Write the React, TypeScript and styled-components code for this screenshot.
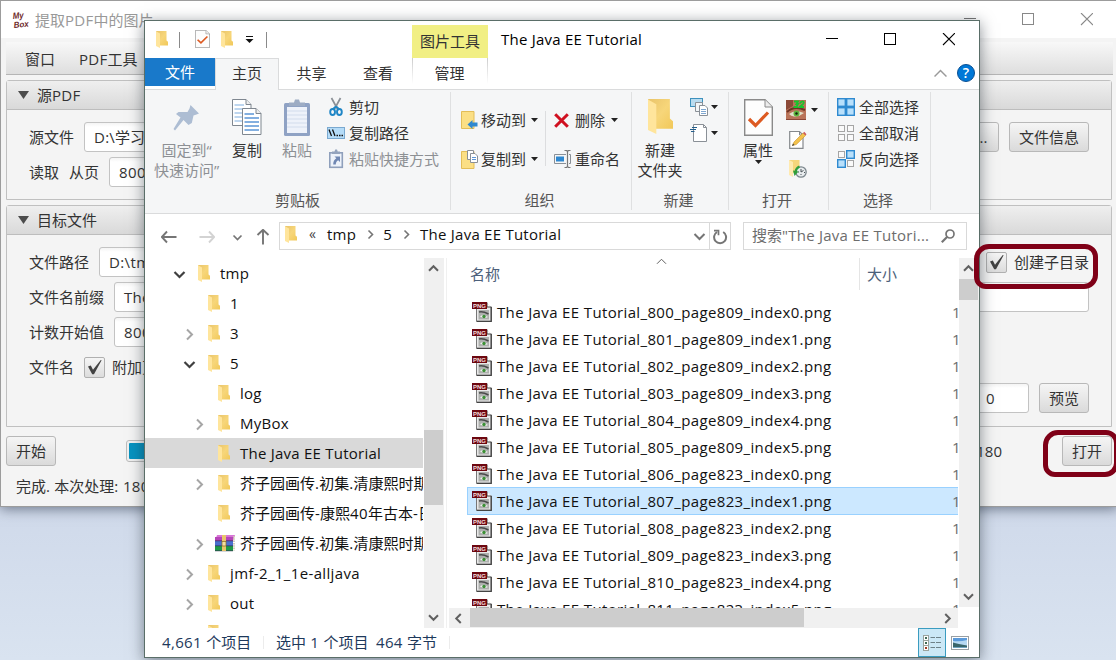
import React from 'react';
import styled, { createGlobalStyle, css } from 'styled-components';

const GlobalStyle = createGlobalStyle`
  *, *::before, *::after { box-sizing: border-box; }
  body { margin: 0; overflow: hidden; }
  body, #root { font-family: "Open Sans", "Noto Sans CJK SC", sans-serif; font-size: 15px; }
  svg { display: block; flex: none; }
`;

/* ---------- text ---------- */

const Latin = styled.span<{ $digits: boolean }>`
  letter-spacing: ${p => (p.$digits ? 0.36 : 0.24)}px;
`;

/** Opens up the Latin runs between the evenly spaced Chinese glyphs. */
function Mixed({ text }: { text: string }) {
  const runs = text.split(/([\u3000-\u9fff]+)/).filter(Boolean);
  return (
    <>
      {runs.map((run, i) =>
        /[\u3000-\u9fff]/.test(run) ? <React.Fragment key={i}>{run}</React.Fragment> : <Latin key={i} $digits={/\d/.test(run)}>{run}</Latin>
      )}
    </>
  );
}

/* ---------- desktop ---------- */

const Desktop = styled.div`
  position: relative;
  width: 1116px;
  height: 660px;
  overflow: hidden;
  background: linear-gradient(#cfd9ea 500px, #d9e3f0 660px);
  white-space: pre;
  line-height: 20px;
`;

const Ring = styled.div<{ $x: number; $y: number; $w: number; $h: number }>`
  position: absolute;
  left: ${p => p.$x}px;
  top: ${p => p.$y}px;
  width: ${p => p.$w}px;
  height: ${p => p.$h}px;
  border: 5px solid #7f0017;
  border-radius: 15px 13px 14px 12px;
`;

/* ---------- MyBox window ---------- */

const AppWindow = styled.section`
  position: absolute;
  left: 0;
  top: 0;
  width: 1118px;
  height: 507px;
  border: 1px solid #9c9c9c;
  background: #f4f4f4;
  color: #333;
  display: flex;
  flex-direction: column;
  box-shadow: 0 2px 12px rgba(30, 40, 60, 0.55);

  > * { flex: none; }
`;

const AppTitle = styled.header`
  height: 37px;
  padding: 0 24px 0 11px;
  display: flex;
  align-items: center;
  background: #fff;
  color: #999;
`;

const AppName = styled.span`
  margin-left: 5px;
  flex: 1;
`;

const AppControls = styled.div`
  display: flex;
  gap: 46px;
`;

const AppMenu = styled.nav`
  height: 33px;
  margin: 4px 4px 0 5px;
  padding: 2px 19px 0;
  display: flex;
  align-items: center;
  gap: 24px;
  background: linear-gradient(#f8f8f8, #dedede);
  border-bottom: 1px solid #b5b5b5;
`;

const Pane = styled.section<{ $height: number }>`
  height: ${p => p.$height}px;
  margin: 5px 5px 0 5px;
  border: 1px solid #c0c0c0;
  border-radius: 3px 3px 0 0;
`;

const PaneHead = styled.h2`
  margin: 0;
  height: 29px;
  padding: 0 11px;
  display: flex;
  align-items: center;
  gap: 8px;
  font-size: 15px;
  font-weight: 400;
  background: linear-gradient(#efefef, #d9d9d9);
  border-bottom: 1px solid #bdbdbd;
`;

const PaneBody = styled.div`
  padding: 12px 22px;
  display: flex;
  flex-direction: column;
  gap: 5px;
`;

const FormRow = styled.div<{ $top?: number }>`
  height: 30px;
  margin-top: ${p => p.$top ?? 0}px;
  display: flex;
  align-items: center;
  gap: 10px;
`;

const Field = styled.div<{ $width?: number }>`
  height: 30px;
  ${p => (p.$width ? css`width: ${p.$width}px;` : css`flex: 1;`)}
  padding: 4px 9px;
  background: linear-gradient(#f4f4f4, #fff 4px);
  border: 1px solid #c3c3c3;
  border-radius: 3px;
`;

const PushButton = styled.button<{ $width: number }>`
  width: ${p => p.$width}px;
  height: 30px;
  flex: none;
  padding: 0 0 1px;
  font: inherit;
  color: #333;
  background: linear-gradient(#f5f5f5, #dadada);
  border: 1px solid #b8b8b8;
  border-radius: 3px;
`;

const Check = styled.span`
  width: 21px;
  height: 21px;
  flex: none;
  display: grid;
  place-items: center;
  background: linear-gradient(#f5f5f5, #dcdcdc);
  border: 1px solid #b0b0b0;
  border-radius: 2px;
`;

const CheckLabel = styled.span`
  display: flex;
  align-items: center;
  gap: 7px;
`;

const Spacer = styled.span`
  flex: 1;
`;

const ActionRow = styled.div`
  height: 30px;
  margin: 9px 5px 0 5px;
  display: flex;
  align-items: center;
`;

const Progress = styled.div`
  width: 840px;
  height: 22px;
  margin-left: 70px;
  padding: 2px;
  border: 1px solid #bcbcbc;
  border-radius: 3px;
  background: #f0f0f0;
`;

const ProgressFill = styled.div`
  height: 16px;
  background: #0893c0;
  border-radius: 1px;
`;

const Count = styled.span`
  width: 36px;
  text-align: right;
`;

const AppStatus = styled.div`
  padding: 10px 15px 0;
`;

/* ---------- Explorer window ---------- */

const Explorer = styled.section`
  position: absolute;
  left: 144px;
  top: 20px;
  width: 836px;
  height: 638px;
  border: 1px solid #5a6e68;
  background: #fff;
  color: #111;
  display: flex;
  flex-direction: column;
  box-shadow: 0 3px 14px rgba(20, 30, 40, 0.5);
`;

const TitleRow = styled.header`
  height: 37px;
  display: flex;
  align-items: center;
`;

const QuickAccess = styled.div`
  width: 267px;
  padding: 0 0 1px 11px;
  display: flex;
  align-items: center;
`;

const Bar = styled.i<{ $left: number; $right: number }>`
  width: 1px;
  height: 16px;
  margin: 2px ${p => p.$right}px 0 ${p => p.$left}px;
  background: #8a8a8a;
`;

const ToolTabHead = styled.div`
  width: 76px;
  height: 33px;
  margin-top: 4px;
  padding-top: 6px;
  text-align: center;
  background: #f1ef84;
  color: #333;
`;

const WindowTitle = styled.h1`
  margin: 0 0 1px 13px;
  flex: 1;
  font-size: 15px;
  font-weight: 400;
  color: #000;
`;

const WindowControls = styled.div`
  display: flex;
  gap: 46px;
  margin-right: 24px;
`;

const TabRow = styled.nav`
  height: 32px;
  display: flex;
  align-items: flex-start;
  color: #333;
  border-bottom: 1px solid #dadbdc;
`;

const Tab = styled.div<{ $width: number; $kind?: 'file' | 'active' | 'tool' }>`
  width: ${p => p.$width}px;
  height: 28px;
  padding: 5px 1px 0 0;
  text-align: center;
  ${p => p.$kind === 'file' && css`background: #1979ca; color: #fff; padding: 4px 0 0;`}
  ${p => p.$kind === 'active' && css`
    height: 32px;
    background: #f5f6f7;
    border: 1px solid #dadbdc;
    border-bottom: 0;
    padding: 4px 0 0;
  `}
  ${p => p.$kind === 'tool' && css`
    border: solid transparent;
    border-width: 0 1px;
    background: linear-gradient(#fff, #fff) padding-box, linear-gradient(#ccc, #fff 26px) border-box;
  `}
`;

const TabTail = styled.div`
  margin-left: auto;
  padding: 6px 4px 0 0;
  display: flex;
  align-items: center;
  gap: 10px;
`;

const Ribbon = styled.div`
  height: 124px;
  padding: 2px 0 3px;
  display: flex;
  background: #f5f6f7;
  border-bottom: 1px solid #dadbdc;
`;

const Group = styled.section<{ $width: number }>`
  width: ${p => p.$width}px;
  display: flex;
  flex-direction: column;
  border-right: 1px solid #dfe0e1;
`;

const GroupBody = styled.div<{ $left: number }>`
  height: 98px;
  padding-left: ${p => p.$left}px;
  display: flex;
`;

const GroupName = styled.div<{ $inset?: number }>`
  padding-right: ${p => p.$inset ?? 3}px;
  text-align: center;
  color: #555;
`;

const BigButton = styled.div<{ $width: number; $muted?: boolean }>`
  width: ${p => p.$width}px;
  padding-top: 6px;
  display: flex;
  flex-direction: column;
  align-items: center;
  text-align: center;
  color: ${p => (p.$muted ? '#8d9094' : '#333')};
`;

const BigIcon = styled.span`
  height: 42px;
  padding-top: 1px;
`;

const SmallStack = styled.div<{ $left: number; $top: number; $gap: number }>`
  margin-left: ${p => p.$left}px;
  padding-top: ${p => p.$top}px;
  display: flex;
  flex-direction: column;
  gap: ${p => p.$gap}px;
`;

const SmallButton = styled.div<{ $muted?: boolean; $gap?: number }>`
  height: 20px;
  display: flex;
  align-items: center;
  gap: ${p => p.$gap ?? 3}px;
  color: ${p => (p.$muted ? '#8d9094' : '#333')};
`;

const Divider = styled.i`
  width: 1px;
  height: 55px;
  margin: 19px 0 0 7px;
  background: #dcdddf;
`;

const NavRow = styled.div`
  height: 45px;
  padding: 8px 12px 8px 16px;
  display: flex;
  align-items: center;
`;

const NavButtons = styled.div`
  width: 118px;
  padding-top: 2px;
  display: flex;
  align-items: center;
`;

const Push = styled.span<{ $left: number }>`
  flex: none;
  margin-left: ${p => p.$left}px;
`;

const Box = styled.div<{ $width: number; $left?: number }>`
  width: ${p => p.$width}px;
  height: 28px;
  margin-left: ${p => p.$left ?? 0}px;
  display: flex;
  align-items: center;
  border: 1px solid #d9d9d9;
`;

const Crumbs = styled.div`
  flex: 1;
  padding: 0 0 4px 5px;
  display: flex;
  align-items: center;
`;

const Overflow = styled.span`
  width: 9px;
  margin-left: 12px;
  font-size: 14px;
  color: #444;
`;

const RefreshCell = styled.div`
  width: 21px;
  height: 26px;
  padding-top: 2px;
  margin-left: 3px;
  display: grid;
  place-items: center;
  border-left: 1px solid #d9d9d9;
`;

const SearchText = styled.span`
  flex: 1;
  padding: 0 0 2px 8px;
  color: #6d6d6d;
`;

const Content = styled.div`
  height: 370px;
  display: flex;
`;

const Tree = styled.div`
  width: 278px;
  height: 370px;
  overflow: hidden;
`;

const TreeRow = styled.div<{ $depth: number; $selected?: boolean }>`
  height: 30px;
  padding-left: ${p => 28 + p.$depth * 10}px;
  display: flex;
  align-items: center;
  background: ${p => (p.$selected ? '#d9d9d9' : 'transparent')};
`;

const TreeArrow = styled.span`
  width: 25px;
  flex: none;
  padding-top: 2px;
`;

const TreeIcon = styled.span`
  width: 22px;
  flex: none;
`;

const ArchiveSlot = styled.div`
  margin-left: -3px;
`;

const TreeLabel = styled.span`
  flex: none;
`;

const VTrack = styled.div<{ $height: number }>`
  width: 20px;
  height: ${p => p.$height}px;
  padding: 4px 0;
  display: flex;
  flex-direction: column;
  align-items: flex-start;
  background: #f0f0f0;

  > svg { margin-left: 3px; }
`;

const VThumb = styled.div<{ $top: number; $height: number }>`
  width: 19px;
  height: ${p => p.$height}px;
  margin: ${p => p.$top}px 0 auto;
  background: #cdcdcd;
`;

const FilePane = styled.div`
  width: 533px;
  margin-left: 2px;
  padding-left: 2px;
  border-left: 1px solid #f0f0f0;
  display: grid;
  grid-template: 350px 20px / 509px 20px;
  column-gap: 1px;
`;

const FileList = styled.div`
  overflow: hidden;
  padding-left: 18px;
`;

const ListHead = styled.div`
  height: 32px;
  margin-bottom: 8px;
  padding-left: 3px;
  display: flex;
  color: #4c607a;
`;

const HeadCell = styled.div<{ $width: number }>`
  width: ${p => p.$width}px;
  padding-top: 6px;
  display: flex;
`;

const SortMark = styled.span`
  margin: -9px 0 0 155px;
`;

const SizeHead = styled.div`
  padding: 6px 0 0 7px;
  border-left: 1px solid #e5e5e5;
`;

const FileRow = styled.div<{ $selected?: boolean }>`
  height: 28px;
  margin-bottom: -1px;
  padding-left: 4px;
  display: flex;
  align-items: center;
  border: 1px solid transparent;
  border-right: 0;
  ${p => p.$selected && css`background: #cce8ff; border-color: #99d1ff;`}
`;

const FileName = styled.span`
  width: 460px;
  flex: none;
  padding-left: 5px;
`;

const FileSize = styled.span`
  color: #6d6d6d;
`;

const HTrack = styled.div`
  height: 20px;
  padding: 0 4px 0 3px;
  display: flex;
  align-items: center;
  background: #f0f0f0;
`;

const HThumb = styled.div`
  width: 334px;
  height: 19px;
  margin: 0 auto 1px 5px;
  background: #cdcdcd;
`;

const StatusBar = styled.footer`
  flex: 1;
  padding-left: 17px;
  display: flex;
  align-items: center;
  color: #1e395b;
`;

const StatusCell = styled.span<{ $width: number }>`
  width: ${p => p.$width}px;
  flex: none;
  padding-bottom: 2px;
`;

const StatusSplit = styled.i`
  width: 1px;
  height: 13px;
  background: #ececec;
`;

const ViewButton = styled.span<{ $on?: boolean }>`
  width: 28px;
  height: 29px;
  display: grid;
  place-items: center;
  border: 1px solid ${p => (p.$on ? '#3a9cc0' : 'transparent')};
  background: ${p => (p.$on ? '#cbe8f6' : 'transparent')};
`;

/* ---------- icons ---------- */

const Folder = ({ w = 12, h = 17 }: { w?: number; h?: number }) => (
  <svg width={w} height={h} viewBox="0 0 12 17" preserveAspectRatio="none">
    <defs>
      <linearGradient id="folderBody" x1="0" y1="0" x2="1" y2="1">
        <stop offset="0" stopColor="#e9c46a" />
        <stop offset=".5" stopColor="#f7d67a" />
        <stop offset="1" stopColor="#f1c859" />
      </linearGradient>
    </defs>
    <path d="M0 0H10.500V9.500L12 10.800V14.500H3.500Z" fill="url(#folderBody)" />
    <path d="M0 .3L4 2.600V17L0 15Z" fill="#ffe59c" />
  </svg>
);

const Chevron = ({ dir, size = 4.5, color = '#505050', width = 2 }: { dir: 'up' | 'down' | 'left' | 'right'; size?: number; color?: string; width?: number }) => {
  const turn = { up: 180, down: 0, left: 90, right: -90 }[dir];
  return (
    <svg width="13" height="13" viewBox="-6.5 -6.5 13 13">
      <path d={`M${-size} ${-size / 2}L0 ${size / 2}L${size} ${-size / 2}`} transform={`rotate(${turn})`} fill="none" stroke={color} strokeWidth={width} />
    </svg>
  );
};

const Arrow = ({ turn = 0, color = '#757575' }: { turn?: number; color?: string }) => (
  <svg width="16" height="16" viewBox="-8 -8 16 16">
    <path d="M7.500 0H-7M-2 -5.500L-7.200 0L-2 5.500" transform={`rotate(${turn})`} fill="none" stroke={color} strokeWidth="1.900" />
  </svg>
);

const Caret = () => (
  <svg width="7" height="4" viewBox="0 0 7 4"><path d="M0 0H7L3.500 4Z" fill="#222" /></svg>
);

const MinIcon = ({ color }: { color: string }) => (
  <svg width="12" height="13"><path d="M0 5.500H12" stroke={color} /></svg>
);
const MaxIcon = ({ color }: { color: string }) => (
  <svg width="12" height="13"><rect x=".5" y=".5" width="11" height="11" fill="none" stroke={color} /></svg>
);
const CloseIcon = ({ color }: { color: string }) => (
  <svg width="13" height="13"><path d="M1 0L13 12M13 0L1 12" stroke={color} strokeWidth="1.100" /></svg>
);

const LogoIcon = () => (
  <svg width="18" height="18" viewBox="0 0 18 18" fontFamily="Liberation Sans" fontStyle="italic" fontWeight="700" fill="#6e2a2a">
    <text x="1" y="8" fontSize="9" textLength="11" lengthAdjust="spacingAndGlyphs" transform="rotate(-5 1 8)">My</text>
    <text x="2" y="17" fontSize="8.500" textLength="15" lengthAdjust="spacingAndGlyphs" transform="rotate(-6 2 17)">Box</text>
  </svg>
);

const TickIcon = () => (
  <svg width="17" height="17" viewBox="0 0 17 17"><path d="M2 7.600L4.800 6.400L7 10.800L14.800 1L15.600 1.300L8 15.200H6.200Z" fill="#424242" /></svg>
);

const TriangleIcon = () => (
  <svg width="11" height="8"><path d="M0 0H11L5.500 8Z" fill="#4c4c4c" /></svg>
);

const CheckedPage = ({ w, h }: { w: number; h: number }) => (
  <svg width={w} height={h} viewBox="0 0 29 37" preserveAspectRatio="none">
    <path d="M.7 .7H21L28.300 8V36.300H.7Z" fill="#fdfdfd" stroke="#8a8a8a" strokeWidth="1.400" />
    <path d="M21 .7V8H28.300" fill="#ececec" stroke="#8a8a8a" />
    <path d="M5 20L11.500 26.500L24 13.500" fill="none" stroke="#dd5a22" strokeWidth="3.200" />
  </svg>
);

const CustomizeIcon = () => (
  <svg width="9" height="7"><path d="M1 .5H8" stroke="#111" /><path d="M.5 3H8.500L4.500 7Z" fill="#111" /></svg>
);

const HelpIcon = () => (
  <svg width="18" height="18" viewBox="0 0 18 18">
    <circle cx="9" cy="9" r="8.500" fill="#0078d7" stroke="#0a4f92" />
    <text x="9" y="14" fontSize="14" textAnchor="middle" fill="#fff" fontWeight="600">?</text>
  </svg>
);

const PinIcon = () => (
  <svg width="27" height="41" viewBox="0 1 27 41">
    <path d="M17.500 7L26 15.500L23.500 16.500L20.500 17.500L18.800 25L15.500 27L10.500 22L2 32.500L.5 31L7.500 19.500L3 16L5.500 14L14.500 14L16.500 10.500Z" fill="#adbdd3" />
  </svg>
);

const PageLines = ({ x, y, tone }: { x: number; y: number; tone: string }) => (
  <g transform={`translate(${x} ${y})`}>
    <path d="M.5 .5H14L19 5.500V26.500H.5Z" fill="#fff" stroke="#7f8790" />
    <path d="M14 .5V5.500H19" fill="#eee" stroke="#7f8790" />
    <path d="M2.500 6H12M2.500 10H17M2.500 14H17M2.500 18H17M2.500 22H17" stroke={tone} strokeWidth="1.300" />
  </g>
);

const CopyIcon = () => (
  <svg width="30" height="37" viewBox="0 0 30 37">
    <PageLines x={0} y={0} tone="#a9c9ea" />
    <PageLines x={10} y={9} tone="#5b95d6" />
  </svg>
);

const PasteIcon = () => (
  <svg width="28" height="38" viewBox="0 0 28 38">
    <rect x="1" y="4" width="26" height="33" rx="1.500" fill="#8fa2c4" />
    <rect x="4" y="8" width="20" height="26" fill="#eef2fa" />
    <path d="M4 12H24M4 16H24M4 20H24M4 24H24M4 28H24" stroke="#d2dcec" />
    <path d="M6 7V3.500H11L12 .5H16L17 3.500H22V7Z" fill="#9dacc4" />
  </svg>
);

const CutIcon = () => (
  <svg width="18" height="20" viewBox="0 0 18 20">
    <path d="M4.500 1L10.500 12M13.500 1L7.500 12" stroke="#8b9096" strokeWidth="1.700" />
    <path d="M9 9.500L5.500 12.500M9 9.500L12.500 12.500" stroke="#1f86c6" strokeWidth="2" />
    <ellipse cx="5.600" cy="15" rx="2.400" ry="3" fill="none" stroke="#1f86c6" strokeWidth="1.900" />
    <ellipse cx="12.400" cy="15" rx="2.400" ry="3" fill="none" stroke="#1f86c6" strokeWidth="1.900" />
  </svg>
);

const CopyPathIcon = () => (
  <svg width="18" height="12" viewBox="0 0 18 12">
    <rect x=".5" y=".5" width="17" height="11" fill="#b5dcf8" stroke="#7aa9d0" />
    <path d="M2 2.500L4.500 9M5.500 2.500L8 9" stroke="#111" strokeWidth="1.300" />
    <path d="M9.500 8.500H11M12 8.500H13.500M14.500 8.500H16" stroke="#111" strokeWidth="1.300" />
  </svg>
);

const PasteLinkIcon = () => (
  <svg width="18" height="20" viewBox="0 0 18 20">
    <rect x="2.800" y="3.800" width="12.500" height="14.500" fill="#edf2fa" stroke="#8fa0bc" strokeWidth="1.600" />
    <path d="M5 5V2.500H7.500L8.200 .5H10L10.700 2.500H13V5Z" fill="#93a3bd" />
    <path d="M7.500 7.500H13V13L11.200 11.200C9.500 12.300 8.800 13.500 8.800 15.500H6.200C6.200 12.500 7.200 10.800 9.300 9.300Z" fill="#6f87b3" />
  </svg>
);

const MoveToIcon = () => (
  <svg width="17" height="18" viewBox="0 0 17 18">
    <path d="M.5 .5H13V17.500H.5Z" fill="#fbdf85" stroke="#e3bd58" />
    <path d="M6.500 13.500L11.500 9V11.500H16.500V15.500H11.500V18Z" fill="#2f88d0" />
  </svg>
);

const CopyToIcon = () => (
  <svg width="17" height="19" viewBox="0 0 17 19">
    <path d="M.5 1.500H13V18.500H.5Z" fill="#fbdf85" stroke="#e3bd58" />
    <path d="M6.500 .5H12.500V9.500H6.500Z" fill="#fff" stroke="#8a9097" />
    <path d="M9.500 3.500H14L16.500 6V12.500H9.500Z" fill="#fff" stroke="#8a9097" />
    <path d="M11 7.500H15M11 9.500H15" stroke="#5b95d6" />
  </svg>
);

const DeleteIcon = () => (
  <svg width="15" height="15" viewBox="0 0 15 15"><path d="M1.200 1.200L13.800 13.800M13.800 1.200L1.200 13.800" stroke="#d01020" strokeWidth="3" /></svg>
);

const RenameIcon = () => (
  <svg width="17" height="18" viewBox="0 0 17 18">
    <path d="M12 4.500H.5V13.500H12M15 4.500H16.500V13.500H15" fill="none" stroke="#8a9097" />
    <rect x="2" y="6.500" width="8" height="5" fill="#2f88d0" />
    <path d="M10.500 .5H12.500L13.500 1.500L14.500 .5H16.500M13.500 1.500V16.500M10.500 17.500H12.500L13.500 16.500L14.500 17.500H16.500" fill="none" stroke="#777" strokeWidth="1.200" />
  </svg>
);

const NewItemIcon = () => (
  <svg width="18" height="18" viewBox="0 0 18 18">
    <rect x=".5" y=".5" width="12" height="8" fill="#b9dcf0" stroke="#3d91bd" />
    <path d="M5.500 4.500H12.500V13.500H5.500Z" fill="#f2f5f7" stroke="#8a9097" />
    <path d="M9.500 7.500H15L17.500 10V17.500H9.500Z" fill="#fff" stroke="#8a9097" />
    <path d="M11 11.500H16M11 13.500H16M11 15.500H16" stroke="#7ea6d0" />
  </svg>
);

const EasyAccessIcon = () => (
  <svg width="18" height="18" viewBox="0 0 18 18">
    <path d="M3.500 .5H13.500L16.500 3.500V17.500H3.500Z" fill="#fff" stroke="#8a9097" />
    <path d="M13.500 .5V3.500H16.500" fill="none" stroke="#8a9097" />
    <path d="M2 3.500H7M0 5.500H6M1 7.500H4.500" stroke="#245f8c" strokeWidth="1.200" />
  </svg>
);

const ViewerIcon = () => (
  <svg width="20" height="20" viewBox="0 0 20 20">
    <rect width="20" height="20" fill="#b9745a" />
    <path d="M0 0H7V6L0 10Z" fill="#8c4a38" />
    <path d="M1 12Q8 5 19 10" fill="none" stroke="#6e3425" strokeWidth="2" />
    <path d="M3 14Q9 9 18 13Q13 17 8 16.500Q5 16 3 14Z" fill="#dfe0c8" />
    <circle cx="10.500" cy="13.500" r="3" fill="#5cb53c" />
    <circle cx="10.500" cy="13.500" r="1.200" fill="#12240e" />
    <path d="M8 1.500H12L10.500 4H12L10.500 7H7.500M14 3.500Q15 1 17 1.500Q19 2.500 16 5L13.500 7H18" fill="none" stroke="#19c32c" strokeWidth="1.800" />
    <path d="M0 19H20V20H0Z" fill="#8a4636" />
  </svg>
);

const EditIcon = () => (
  <svg width="18" height="19" viewBox="0 0 18 19">
    <path d="M.7 1.500H10.500L14 5V18.300H.7Z" fill="#fff" stroke="#85898d" strokeWidth="1.200" />
    <path d="M10.500 1.500V5H14" fill="none" stroke="#85898d" />
    <path d="M3.500 15.500L5 12L14 3L16.500 5.500L7.300 14.500Z" fill="#f3c24c" stroke="#c8922a" strokeWidth=".6" />
    <path d="M14 3L15.300 1.800L17.500 4.200L16.500 5.500Z" fill="#cf5b5b" />
    <path d="M3 16L4 13.500L5.500 15Z" fill="#444" />
  </svg>
);

const HistoryIcon = () => (
  <svg width="18" height="19" viewBox="0 0 18 19">
    <path d="M0 1H10.500V14H0Z" fill="#f6d67b" />
    <path d="M0 1L4 3V18L0 16Z" fill="#ffeab0" />
    <circle cx="12" cy="13" r="5.200" fill="#e8ecee" stroke="#7b868c" strokeWidth="1.300" />
    <path d="M12 10V13L14.500 11.500M9 13H10M12 16V15M15 13.500H16" fill="none" stroke="#4a5358" />
    <path d="M4 11.500L9.500 12.500L5.500 17Z" fill="#2f9e3c" />
    <path d="M6.500 13Q7 9 10.500 7.500" fill="none" stroke="#2f9e3c" strokeWidth="2.200" />
  </svg>
);

const SelectIcon = ({ on }: { on: [boolean, boolean, boolean, boolean] }) => (
  <svg width="18" height="18" viewBox="0 0 18 18">
    {on.map((lit, i) => {
      const x = (i % 2) * 9;
      const y = i > 1 ? 9 : 0;
      return lit ? (
        <rect key={i} x={x + 0.7} y={y + 0.7} width="7.600" height="7.600" fill="#b9e0fb" stroke="#2f8ad0" strokeWidth="1.400" />
      ) : (
        <rect key={i} x={x + 1.5} y={y + 1.5} width="6" height="6" fill="#fafafa" stroke="#a5a5a5" />
      );
    })}
  </svg>
);

const RefreshIcon = () => (
  <svg width="15" height="16" viewBox="0 0 15 16">
    <path d="M10.200 3A6 6 0 1 1 4 3" fill="none" stroke="#757575" strokeWidth="2" />
    <path d="M1 1.700H5.500V6.200" fill="none" stroke="#757575" strokeWidth="1.700" />
  </svg>
);

const SearchIcon = () => (
  <svg width="14" height="14" viewBox="0 0 14 14">
    <circle cx="9" cy="5" r="4" fill="none" stroke="#757575" strokeWidth="1.700" />
    <path d="M6 8L.8 13.200" stroke="#757575" strokeWidth="2.200" />
  </svg>
);

const ArchiveIcon = () => (
  <svg width="20" height="17" viewBox="0 0 20 17">
    <path d="M2 0H20L18 6H0Z" fill="#d774d6" />
    <rect y="2" width="18" height="4" fill="#b544b8" />
    <rect y="6" width="18" height="5" fill="#4a70cf" />
    <rect y="11" width="18" height="5" fill="#1f9a46" />
    <path d="M0 5.800H18M0 10.800H18M0 15.800H18" stroke="#303050" strokeWidth=".7" />
    <rect x="7" y="0" width="4" height="16" fill="#e8c56a" />
    <rect x="7" y="6.500" width="4" height="4.500" fill="#f4e1a0" stroke="#8a6a20" strokeWidth=".7" />
    <path d="M19 1V15.500" stroke="#cfc9b4" strokeWidth="1.800" strokeDasharray="1.500 .8" />
  </svg>
);

const PngIcon = () => (
  <svg width="20" height="20" viewBox="0 0 20 20">
    <path d="M4.500 1H15L19 5V19H4.500Z" fill="#e9e9e9" stroke="#777" />
    <path d="M19.300 5V19.500H4.500" fill="none" stroke="#444" strokeWidth="1.200" />
    <path d="M15 .5V5H19.500" fill="#fff" stroke="#444" />
    <rect x="6.500" y="8" width="10.500" height="9.500" fill="#aeb0ae" />
    <path d="M7 10Q11 9 16.500 12" fill="none" stroke="#4a4a4a" strokeWidth="1.500" />
    <path d="M8 14.500Q11 12 16 15Q12 17 8 14.500Z" fill="#f0f3ee" />
    <circle cx="12" cy="14.500" r="1.700" fill="#3b8f35" />
    <rect y="0" width="15" height="7" fill="#6d0710" />
    <text x="7.500" y="5.900" fontSize="6" fontWeight="700" textAnchor="middle" fill="#f3dcdc" fontFamily="Liberation Sans">PNG</text>
  </svg>
);

const DetailsIcon = () => (
  <svg width="18" height="16" viewBox="0 0 18 16">
    {[0, 5, 10].map(y => (
      <g key={y}>
        <rect x=".5" y={y + 0.5} width="5" height="5" fill="#fff" stroke="#9aa39d" />
        <rect x="2" y={y + 2} width="2" height="2" fill={y === 10 ? '#a03a22' : '#3f6a55'} />
        <path d={`M7.500 ${y + 2.5}H12M13 ${y + 2.5}H18`} stroke="#6e8288" />
      </g>
    ))}
  </svg>
);

const ThumbsIcon = () => (
  <svg width="18" height="14" viewBox="0 0 18 14">
    <rect x=".5" y=".5" width="17" height="13" fill="#fff" stroke="#999fa3" />
    <rect x="2" y="2" width="14" height="10" fill="#b5d8f2" />
    <path d="M2 2H16V4Q9 6 2 5Z" fill="#5b9ada" />
    <path d="M2 6.500Q7 8 16 9.500V12H2Z" fill="#39656a" />
    <path d="M2 11H16V12H2Z" fill="#6fa3c0" />
  </svg>
);

/* ---------- data ---------- */

type Node = { label: string; depth: number; arrow?: 'open' | 'closed'; selected?: boolean; archive?: boolean };

const tree: Node[] = [
  { label: 'tmp', depth: 0, arrow: 'open' },
  { label: '1', depth: 1 },
  { label: '3', depth: 1, arrow: 'closed' },
  { label: '5', depth: 1, arrow: 'open' },
  { label: 'log', depth: 2 },
  { label: 'MyBox', depth: 2, arrow: 'closed' },
  { label: 'The Java EE Tutorial', depth: 2, selected: true },
  { label: '芥子园画传.初集.清康熙时期', depth: 2, arrow: 'closed' },
  { label: '芥子园画传-康熙40年古本-日', depth: 2 },
  { label: '芥子园画传.初集.清康熙时期', depth: 2, arrow: 'closed', archive: true },
  { label: 'jmf-2_1_1e-alljava', depth: 1, arrow: 'closed' },
  { label: 'out', depth: 1, arrow: 'closed' },
  { label: '', depth: 1 },
];

const files = [
  '800_page809_index0', '801_page809_index1', '802_page809_index2', '803_page809_index3',
  '804_page809_index4', '805_page809_index5', '806_page823_index0', '807_page823_index1',
  '808_page823_index2', '809_page823_index3', '810_page823_index4', '811_page823_index5',
];

/* ---------- windows ---------- */

function MyBoxWindow() {
  return (
    <AppWindow>
      <AppTitle>
        <LogoIcon />
        <AppName><Mixed text="提取PDF中的图片" /></AppName>
        <AppControls>
          <MinIcon color="#777" />
          <MaxIcon color="#888" />
          <CloseIcon color="#888" />
        </AppControls>
      </AppTitle>
      <AppMenu>
        <span>窗口</span>
        <span><Mixed text="PDF工具" /></span>
      </AppMenu>
      <Pane $height={120}>
        <PaneHead><TriangleIcon /><span><Mixed text="源PDF" /></span></PaneHead>
        <PaneBody>
          <FormRow>
            源文件
            <Field><Mixed text="D:\学习" /></Field>
            <PushButton $width={35}><Mixed text="..." /></PushButton>
            <PushButton $width={80}>文件信息</PushButton>
          </FormRow>
          <FormRow>
            <span>读取</span>
            <span>从页</span>
            <Field $width={80}><Mixed text="800" /></Field>
          </FormRow>
        </PaneBody>
      </Pane>
      <Pane $height={222}>
        <PaneHead><TriangleIcon /><span>目标文件</span></PaneHead>
        <PaneBody>
          <FormRow>
            文件路径
            <Field $width={840}><Mixed text="D:\tmp\5" /></Field>
            <Spacer />
            <CheckLabel><Check><TickIcon /></Check>创建子目录</CheckLabel>
          </FormRow>
          <FormRow>
            文件名前缀
            <Field><Mixed text="The Java EE Tutorial" /></Field>
          </FormRow>
          <FormRow>
            计数开始值
            <Field $width={80}><Mixed text="800" /></Field>
          </FormRow>
          <FormRow>
            文件名
            <CheckLabel><Check><TickIcon /></Check>附加页码</CheckLabel>
          </FormRow>
          <FormRow $top={-4}>
            <Spacer />
            <Field $width={53}><Mixed text="0" /></Field>
            <PushButton $width={50}>预览</PushButton>
          </FormRow>
        </PaneBody>
      </Pane>
      <ActionRow>
        <PushButton $width={50}>开始</PushButton>
        <Progress><ProgressFill /></Progress>
        <Count>180</Count>
        <Spacer />
        <PushButton $width={50}>打开</PushButton>
      </ActionRow>
      <AppStatus><Mixed text="完成. 本次处理: 180" /></AppStatus>
    </AppWindow>
  );
}

function RibbonBar() {
  return (
    <Ribbon>
      <Group $width={306}>
        <GroupBody $left={1}>
          <BigButton $width={81} $muted><BigIcon><PinIcon /></BigIcon><span>固定到“</span><span>快速访问”</span></BigButton>
          <BigButton $width={40}><BigIcon><CopyIcon /></BigIcon><span>复制</span></BigButton>
          <BigButton $width={60} $muted><BigIcon><PasteIcon /></BigIcon><span>粘贴</span></BigButton>
          <SmallStack $left={0} $top={5} $gap={6}>
            <SmallButton $gap={4}><CutIcon />剪切</SmallButton>
            <SmallButton $gap={4}><CopyPathIcon />复制路径</SmallButton>
            <SmallButton $gap={4} $muted><PasteLinkIcon />粘贴快捷方式</SmallButton>
          </SmallStack>
        </GroupBody>
        <GroupName $inset={0}>剪贴板</GroupName>
      </Group>
      <Group $width={181}>
        <GroupBody $left={10}>
          <SmallStack $left={0} $top={18} $gap={19}>
            <SmallButton><MoveToIcon />移动到<Push $left={2}><Caret /></Push></SmallButton>
            <SmallButton><CopyToIcon />复制到<Push $left={2}><Caret /></Push></SmallButton>
          </SmallStack>
          <Divider />
          <SmallStack $left={8} $top={18} $gap={19}>
            <SmallButton $gap={6}><DeleteIcon />删除<Caret /></SmallButton>
            <SmallButton $gap={4}><RenameIcon />重命名</SmallButton>
          </SmallStack>
        </GroupBody>
        <GroupName>组织</GroupName>
      </Group>
      <Group $width={97}>
        <GroupBody $left={4}>
          <BigButton $width={48}><BigIcon><Folder w={25} h={35} /></BigIcon><span>新建</span><span>文件夹</span></BigButton>
          <SmallStack $left={6} $top={5} $gap={6}>
            <SmallButton><NewItemIcon /><Caret /></SmallButton>
            <SmallButton><EasyAccessIcon /><Caret /></SmallButton>
          </SmallStack>
        </GroupBody>
        <GroupName>新建</GroupName>
      </Group>
      <Group $width={100}>
        <GroupBody $left={9}>
          <BigButton $width={40}><BigIcon><CheckedPage w={29} h={37} /></BigIcon><span>属性</span><Caret /></BigButton>
          <SmallStack $left={8} $top={8} $gap={9}>
            <SmallButton $gap={5}><ViewerIcon /><Caret /></SmallButton>
            <SmallButton><Push $left={3}><EditIcon /></Push></SmallButton>
            <SmallButton><Push $left={3}><HistoryIcon /></Push></SmallButton>
          </SmallStack>
        </GroupBody>
        <GroupName>打开</GroupName>
      </Group>
      <Group $width={102}>
        <GroupBody $left={8}>
          <SmallStack $left={0} $top={5} $gap={6}>
            <SmallButton $gap={4}><SelectIcon on={[true, true, true, true]} />全部选择</SmallButton>
            <SmallButton $gap={4}><SelectIcon on={[false, false, false, false]} />全部取消</SmallButton>
            <SmallButton $gap={4}><SelectIcon on={[false, true, true, false]} />反向选择</SmallButton>
          </SmallStack>
        </GroupBody>
        <GroupName>选择</GroupName>
      </Group>
    </Ribbon>
  );
}

function ExplorerWindow() {
  return (
    <Explorer>
      <TitleRow>
        <QuickAccess>
          <Folder />
          <Bar $left={11} $right={15} />
          <CheckedPage w={15} h={18} />
          <Push $left={11}><Folder /></Push>
          <Push $left={12}><CustomizeIcon /></Push>
          <Bar $left={12} $right={0} />
        </QuickAccess>
        <ToolTabHead>图片工具</ToolTabHead>
        <WindowTitle><Mixed text="The Java EE Tutorial" /></WindowTitle>
        <WindowControls>
          <MinIcon color="#000" />
          <MaxIcon color="#000" />
          <CloseIcon color="#000" />
        </WindowControls>
      </TitleRow>
      <TabRow>
        <Tab $width={70} $kind="file">文件</Tab>
        <Tab $width={64} $kind="active">主页</Tab>
        <Tab $width={66}>共享</Tab>
        <Tab $width={67}>查看</Tab>
        <Tab $width={76} $kind="tool">管理</Tab>
        <TabTail><Chevron dir="up" size={6} color="#9a9a9a" width={1.5} /><HelpIcon /></TabTail>
      </TabRow>
      <RibbonBar />
      <NavRow>
        <NavButtons>
          <Arrow />
          <Push $left={22}><Arrow turn={180} color="#d3d3d3" /></Push>
          <Push $left={16}><Chevron dir="down" size={4} color="#757575" width={1.7} /></Push>
          <Push $left={11}><Arrow turn={90} /></Push>
        </NavButtons>
        <Box $width={452}>
          <Crumbs>
            <Folder />
            <Overflow>«</Overflow>
            <Push $left={9}><Mixed text="tmp" /></Push>
            <Push $left={8}><Chevron dir="right" size={4} color="#757575" width={1.6} /></Push>
            <Push $left={6}><Mixed text="5" /></Push>
            <Push $left={8}><Chevron dir="right" size={4} color="#757575" width={1.6} /></Push>
            <Push $left={7}><Mixed text="The Java EE Tutorial" /></Push>
          </Crumbs>
          <Chevron dir="down" size={5} color="#757575" />
          <RefreshCell><RefreshIcon /></RefreshCell>
        </Box>
        <Box $width={224} $left={12}>
          <SearchText><Mixed text={'搜索"The Java EE Tutori...'} /></SearchText>
          <SearchIcon />
          <Push $left={11} />
        </Box>
      </NavRow>
      <Content>
        <Tree>
          {tree.map((n, i) => (
            <TreeRow key={i} $depth={n.depth} $selected={n.selected}>
              <TreeArrow>
                {n.arrow === 'open' && <Chevron dir="down" size={5} color="#404040" width={2.2} />}
                {n.arrow === 'closed' && <Chevron dir="right" size={5} color="#a6a6a6" />}
              </TreeArrow>
              <TreeIcon>{n.archive ? <ArchiveSlot><ArchiveIcon /></ArchiveSlot> : <Folder />}</TreeIcon>
              <TreeLabel><Mixed text={n.label} /></TreeLabel>
            </TreeRow>
          ))}
        </Tree>
        <Push $left={1} />
        <VTrack $height={370}>
          <Chevron dir="up" color="#606060" />
          <VThumb $top={155} $height={75} />
          <Chevron dir="down" color="#606060" />
        </VTrack>
        <FilePane>
          <FileList>
            <ListHead>
              <HeadCell $width={389}>名称<SortMark><Chevron dir="up" color="#606060" width={1} /></SortMark></HeadCell>
              <SizeHead>大小</SizeHead>
            </ListHead>
            {files.map((f, i) => (
              <FileRow key={f} $selected={i === 7}>
                <PngIcon />
                <FileName><Mixed text={`The Java EE Tutorial_${f}.png`} /></FileName>
                <FileSize><Mixed text="1" /></FileSize>
              </FileRow>
            ))}
          </FileList>
          <VTrack $height={349}>
            <Chevron dir="up" color="#606060" />
            <VThumb $top={4} $height={21} />
            <Chevron dir="down" color="#606060" />
          </VTrack>
          <HTrack>
            <Chevron dir="left" color="#606060" />
            <HThumb />
            <Chevron dir="right" color="#606060" />
          </HTrack>
        </FilePane>
      </Content>
      <StatusBar>
        <StatusCell $width={101}><Mixed text="4,661 个项目" /></StatusCell>
        <StatusSplit />
        <Push $left={12} />
        <StatusCell $width={100}><Mixed text="选中 1 个项目" /></StatusCell>
        <StatusCell $width={73}><Mixed text="464 字节" /></StatusCell>
        <StatusSplit />
        <Spacer />
        <ViewButton $on><DetailsIcon /></ViewButton>
        <ViewButton><ThumbsIcon /></ViewButton>
        <Push $left={5} />
      </StatusBar>
    </Explorer>
  );
}

export default function App() {
  return (
    <>
      <GlobalStyle />
      <Desktop>
        <MyBoxWindow />
        <ExplorerWindow />
        <Ring $x={974} $y={244} $w={124} $h={45} />
        <Ring $x={1043} $y={430} $w={76} $h={47} />
      </Desktop>
    </>
  );
}
